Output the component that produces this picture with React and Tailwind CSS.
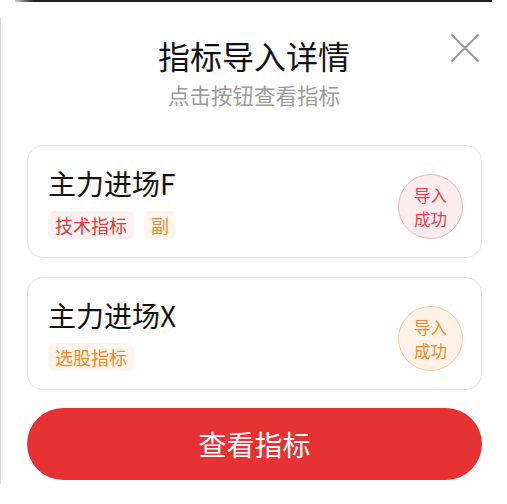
const font = { fontFamily: "'Noto Sans CJK SC', 'Noto Sans', sans-serif" };

const items = [
  {
    name: "主力进场F",
    tags: [
      { text: "技术指标", tone: "red" },
      { text: "副", tone: "orange" },
    ],
    tone: "red",
  },
  {
    name: "主力进场X",
    tags: [{ text: "选股指标", tone: "orange" }],
    tone: "orange",
  },
];

const tagTone = {
  red: "bg-[#fdf0f0] text-[#e03a3d]",
  orange: "bg-[#fff5ec] text-[#ef8a2c]",
};

const badgeTone = {
  red: "bg-[#fdeced] border-[#f1b7b8] text-[#e04447]",
  orange: "bg-[#fff3e7] border-[#f6c9a0] text-[#ee8a30]",
};

function CloseIcon() {
  return (
    <svg width="28" height="28" viewBox="0 0 28 28" fill="none">
      <path d="M1 1L27 27M27 1L1 27" stroke="#9a9a9a" strokeWidth="2" strokeLinecap="round" />
    </svg>
  );
}

function IndicatorCard({ item }) {
  return (
    <div className="flex items-center justify-between rounded-[16px] border border-[#e6e6e6] bg-white pl-[20px] pr-[18px] pt-[18px] pb-[18px]">
      <div className="flex flex-col">
        <div className="text-[28px] leading-[36px] text-[#111]">{item.name}</div>
        <div className="mt-[10px] flex gap-[10px]">
          {item.tags.map((t) => (
            <span
              key={t.text}
              className={`rounded-[6px] px-[7px] text-[18px] leading-[28px] ${tagTone[t.tone]}`}
            >
              {t.text}
            </span>
          ))}
        </div>
      </div>
      <div
        className={`mt-[10px] flex h-[65px] w-[65px] items-center justify-center rounded-full border text-center text-[16.5px] leading-[24px] ${badgeTone[item.tone]}`}
      >
        <p>
          导入
          <br />
          成功
        </p>
      </div>
    </div>
  );
}

export default function App() {
  return (
    <div className="flex h-[504px] w-[507px] overflow-hidden bg-white" style={font}>
      <div className="mt-[18px] mb-[20px] w-[1px] bg-[#d4d4d4]" />
      <div className="flex flex-1 flex-col">
        <div className="ml-[14px] mr-[15px] h-[2px] bg-linear-to-r from-[#cfcfcf] via-[#1e1e1e] via-[4%] to-[#1e1e1e]" />

        {/* Header */}
        <div className="relative flex flex-col items-center pt-[33px]">
          <div className="text-[32px] leading-[40px] text-[#111]">指标导入详情</div>
          <div className="mt-[5px] text-[21.5px] leading-[30px] text-[#9b9b9b]">点击按钮查看指标</div>
          <button className="absolute top-[32px] right-[28px]">
            <CloseIcon />
          </button>
        </div>

        {/* Cards */}
        <div className="ml-[26px] mr-[25px] mt-[35px] flex flex-col gap-[19px]">
          {items.map((item) => (
            <IndicatorCard key={item.name} item={item} />
          ))}
        </div>

        <button className="ml-[26px] mr-[25px] mt-[18px] h-[72px] rounded-full bg-[#e73234] text-[28px] text-white">
          查看指标
        </button>
      </div>
    </div>
  );
}
